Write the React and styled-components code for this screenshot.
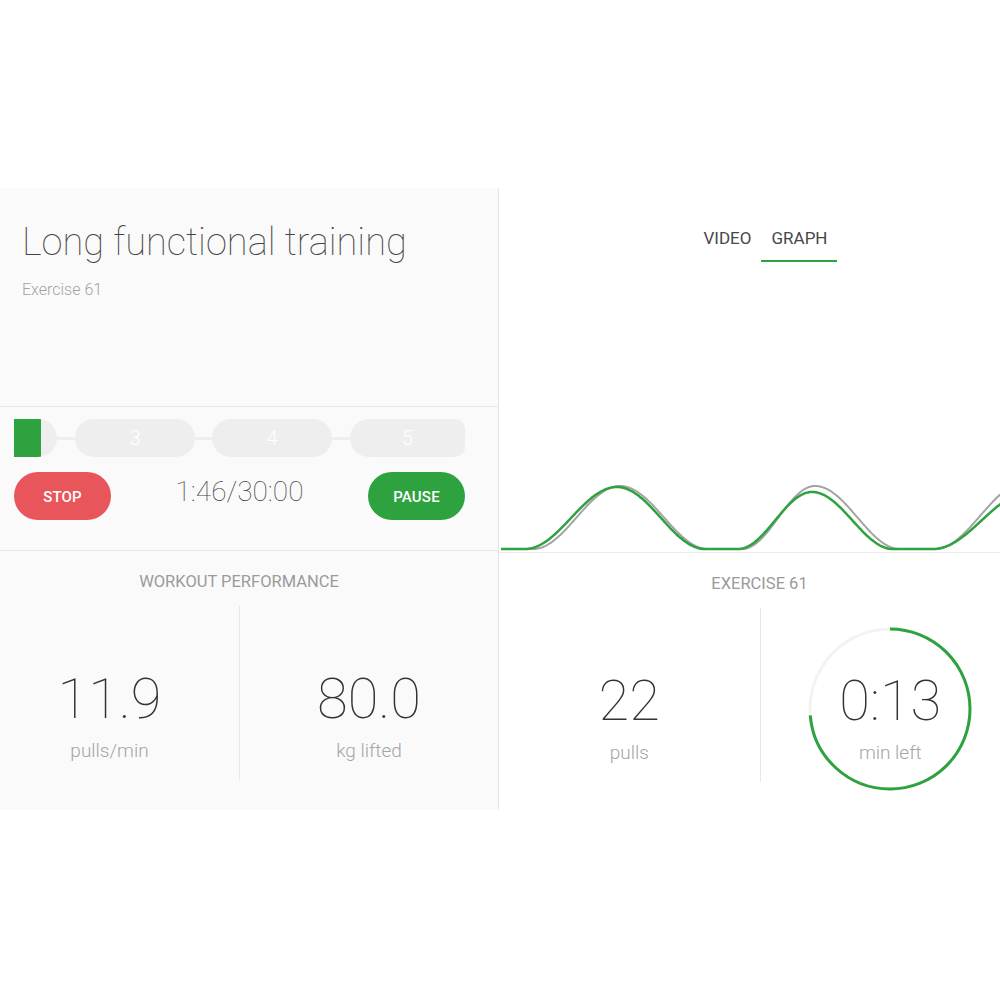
import React from 'react'
import styled, { createGlobalStyle } from 'styled-components'

const GREEN = '#2ea23f'

const GlobalStyle = createGlobalStyle`
  html, body {
    margin: 0;
    padding: 0;
    background: #ffffff;
    font-family: Roboto, 'Liberation Sans', sans-serif;
    overflow: hidden;
  }
`

const Viewport = styled.div`
  width: 1000px;
  height: 1000px;
  overflow: hidden;
  padding-top: 188px;
  box-sizing: border-box;
`

const Board = styled.div`
  display: flex;
  width: 1040px;
  margin-left: -20px;
`

const LeftPanel = styled.section`
  width: 518px;
  background: #fafafa;
  border-right: 1px solid #e6e6e6;
  display: flex;
  flex-direction: column;
`

const RightPanel = styled.section`
  width: 521px;
  background: #ffffff;
  display: flex;
  flex-direction: column;
`

const Header = styled.div`
  height: 219px;
  box-sizing: border-box;
  padding: 32px 0 0 42px;
  border-bottom: 1px solid #e9e9e9;
`

const Title = styled.h1`
  margin: 0;
  font-size: 38px;
  line-height: 44px;
  font-weight: 100;
  color: #444;
`

const Subtitle = styled.div`
  margin-top: 16px;
  font-size: 16px;
  line-height: 20px;
  font-weight: 300;
  color: #a3a3a3;
`

const Controls = styled.div`
  height: 144px;
  box-sizing: border-box;
  padding: 12px 33px 0 34px;
  border-bottom: 1px solid #e9e9e9;
`

const StepTrack = styled.div`
  display: flex;
  align-items: center;
  height: 38px;
`

const Pill = styled.div`
  position: relative;
  width: ${p => p.$w}px;
  height: 38px;
  flex: none;
  background: #eeeeee;
  border-radius: ${p => p.$radius};
  overflow: hidden;
  display: flex;
  align-items: center;
  justify-content: center;
  color: #ffffff;
  font-size: 20px;
  font-weight: 300;
`

const Fill = styled.div`
  position: absolute;
  left: 0;
  top: 0;
  bottom: 0;
  background: ${GREEN};
`

const Connector = styled.div`
  width: ${p => p.$w}px;
  height: 3px;
  flex: none;
  background: #eeeeee;
`

const ButtonRow = styled.div`
  display: flex;
  align-items: center;
  justify-content: space-between;
  margin-top: 15px;
`

const RoundButton = styled.button`
  width: 97px;
  height: 48px;
  border: none;
  border-radius: 24px;
  background: ${p => p.$color};
  color: #ffffff;
  font-family: Roboto, 'Liberation Sans', sans-serif;
  font-size: 15px;
  font-weight: 500;
  letter-spacing: 0.2px;
  padding: 2px 0 0;
`

const Timer = styled.div`
  font-size: 28px;
  font-weight: 100;
  color: #444;
  margin-top: -10px;
`

const Stats = styled.div`
  height: 257px;
  box-sizing: border-box;
  padding-top: 21px;
`

const SectionLabel = styled.div`
  text-align: center;
  font-size: 16.5px;
  line-height: 20px;
  color: #9a9a9a;
  text-transform: uppercase;
`

const StatGrid = styled.div`
  display: grid;
  grid-template-columns: 1fr 1fr;
  margin-top: 14px;
  height: 174px;
`

const StatCell = styled.div`
  display: flex;
  justify-content: center;
  padding-top: 63px;
  box-sizing: border-box;
  & + & {
    border-left: 1px solid #e8e8e8;
  }
`

const StatBlock = styled.div`
  position: relative;
  display: flex;
  flex-direction: column;
  align-items: center;
  gap: 10px;
  height: 94px;
`

const Value = styled.div`
  position: relative;
  font-size: 56px;
  line-height: 60px;
  font-weight: 100;
  color: #333;
`

const Unit = styled.div`
  position: relative;
  font-size: 19px;
  line-height: 24px;
  font-weight: 300;
  color: #a5a5a5;
`

const Ring = styled.svg`
  position: absolute;
  left: 50%;
  top: 50%;
  transform: translate(-50%, calc(-50% - 9px));
`

const TabBar = styled.div`
  height: 274px;
  box-sizing: border-box;
  padding: 30px 0 0 12px;
  display: flex;
  justify-content: center;
  align-items: flex-start;
`

const Tab = styled.div`
  padding: 10px 10px 12px;
  font-size: 17px;
  line-height: 20px;
  color: #474747;
  border-bottom: 2px solid ${p => (p.$active ? GREEN : 'transparent')};
`

const Chart = styled.svg`
  display: block;
  border-bottom: 1px solid #ebebeb;
`

function curve(bumps, base, from, to, offset) {
  const pts = []
  for (let x = from; x <= to; x += 1) {
    let h = 0
    bumps.forEach(({ a, p, b, amp }) => {
      if (x >= a && x <= p) h += amp * (0.5 - 0.5 * Math.cos(Math.PI * (x - a) / (p - a)))
      else if (x > p && x <= b) h += amp * (0.5 + 0.5 * Math.cos(Math.PI * (x - p) / (b - p)))
    })
    pts.push(`${(x - offset).toFixed(1)},${(base - h).toFixed(1)}`)
  }
  return 'M' + pts.join(' L')
}

const greenBumps = [
  { a: 525, p: 617, b: 705, amp: 62 },
  { a: 738, p: 812, b: 893, amp: 57 },
  { a: 933, p: 1030, b: 1120, amp: 57 },
]
const grayBumps = [
  { a: 533, p: 620, b: 708, amp: 63 },
  { a: 742, p: 815, b: 900, amp: 63 },
  { a: 935, p: 1025, b: 1110, amp: 66 },
]

const GraphView = () => (
  <Chart width="521" height="90" viewBox="0 0 521 90">
    <path d={curve(grayBumps, 87, 501, 1020, 499)} fill="none" stroke="#a3a3a3" strokeWidth="2" />
    <path d={curve(greenBumps, 87, 501, 1020, 499)} fill="none" stroke={GREEN} strokeWidth="2.5" />
  </Chart>
)

const TimeRing = ({ fraction }) => {
  const r = 80
  const c = 2 * Math.PI * r
  return (
    <Ring width="170" height="170" viewBox="0 0 170 170">
      <circle cx="85" cy="85" r={r} fill="none" stroke="#f3f3f3" strokeWidth="3" />
      <circle
        cx="85"
        cy="85"
        r={r}
        fill="none"
        stroke={GREEN}
        strokeWidth="3"
        strokeDasharray={`${c * fraction} ${c}`}
        transform="rotate(-90 85 85)"
      />
    </Ring>
  )
}

const Stat = ({ value, unit, children }) => (
  <StatCell>
    <StatBlock>
      {children}
      <Value>{value}</Value>
      <Unit>{unit}</Unit>
    </StatBlock>
  </StatCell>
)

export default function App() {
  return (
    <>
      <GlobalStyle />
      <Viewport>
        <Board>
          <LeftPanel>
            <Header>
              <Title>Long functional training</Title>
              <Subtitle>Exercise 61</Subtitle>
            </Header>
            <Controls>
              <StepTrack>
                <Pill $w={43} $radius="0 19px 19px 0">
                  <Fill style={{ width: 27 }} />
                </Pill>
                <Connector $w={18} />
                <Pill $w={120} $radius="19px">3</Pill>
                <Connector $w={17} />
                <Pill $w={120} $radius="19px">4</Pill>
                <Connector $w={18} />
                <Pill $w={115} $radius="19px 10px 10px 19px">5</Pill>
              </StepTrack>
              <ButtonRow>
                <RoundButton $color="#e8555b">STOP</RoundButton>
                <Timer>1:46/30:00</Timer>
                <RoundButton $color={GREEN}>PAUSE</RoundButton>
              </ButtonRow>
            </Controls>
            <Stats>
              <SectionLabel>Workout performance</SectionLabel>
              <StatGrid>
                <Stat value="11.9" unit="pulls/min" />
                <Stat value="80.0" unit="kg lifted" />
              </StatGrid>
            </Stats>
          </LeftPanel>
          <RightPanel>
            <TabBar>
              <Tab>VIDEO</Tab>
              <Tab $active>GRAPH</Tab>
            </TabBar>
            <GraphView />
            <Stats>
              <SectionLabel>Exercise 61</SectionLabel>
              <StatGrid>
                <Stat value="22" unit="pulls" />
                <Stat value="0:13" unit="min left">
                  <TimeRing fraction={0.736} />
                </Stat>
              </StatGrid>
            </Stats>
          </RightPanel>
        </Board>
      </Viewport>
    </>
  )
}
